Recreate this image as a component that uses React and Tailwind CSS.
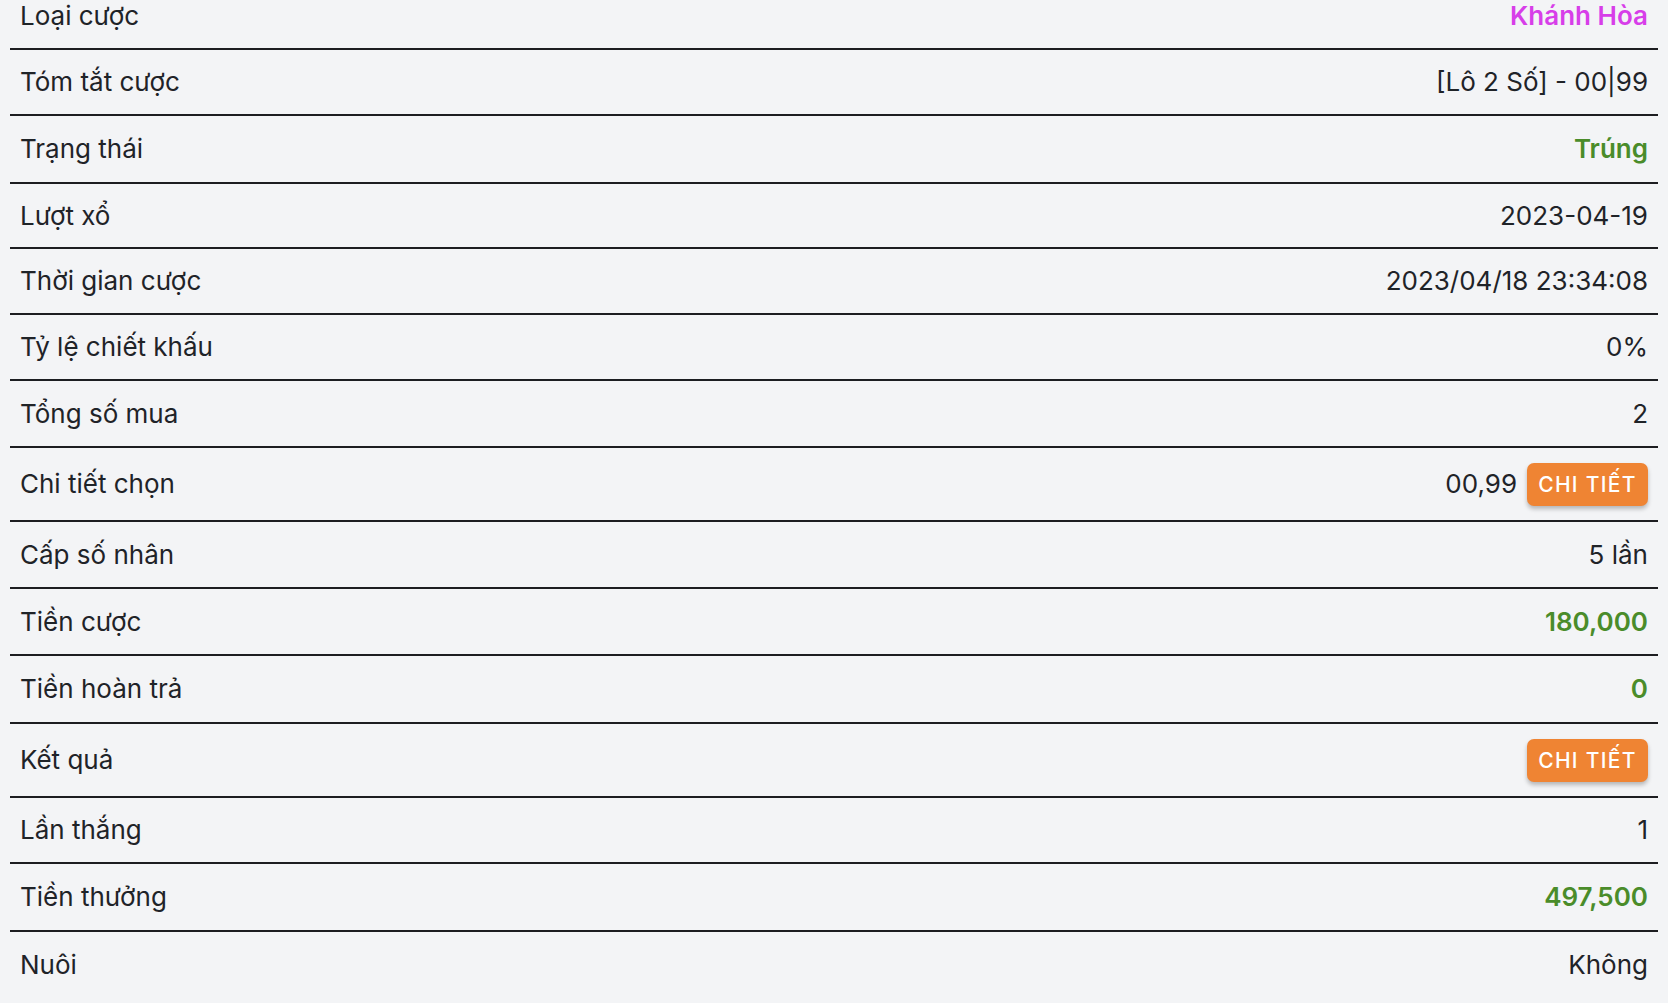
import React from "react";

const rows = [
  { label: "Loại cược", value: "Khánh Hòa", kind: "magenta", h: "h-[66px]" },
  { label: "Tóm tắt cược", value: "[Lô 2 Số] - 00|99", h: "h-[66px]" },
  { label: "Trạng thái", value: "Trúng", kind: "green", h: "h-[68px]" },
  { label: "Lượt xổ", value: "2023-04-19", h: "h-[65px]" },
  { label: "Thời gian cược", value: "2023/04/18 23:34:08", h: "h-[66px]" },
  { label: "Tỷ lệ chiết khấu", value: "0%", h: "h-[66px]" },
  { label: "Tổng số mua", value: "2", h: "h-[67px]" },
  { label: "Chi tiết chọn", value: "00,99", button: true, h: "h-[74px]" },
  { label: "Cấp số nhân", value: "5 lần", h: "h-[67px]" },
  { label: "Tiền cược", value: "180,000", kind: "green", h: "h-[67px]" },
  { label: "Tiền hoàn trả", value: "0", kind: "green", h: "h-[68px]" },
  { label: "Kết quả", value: null, button: true, h: "h-[74px]" },
  { label: "Lần thắng", value: "1", h: "h-[66px]" },
  { label: "Tiền thưởng", value: "497,500", kind: "green", h: "h-[68px]" },
  { label: "Nuôi", value: "Không", h: "h-[66px]", last: true },
];

function Btn() {
  return (
    <button className="ml-[10px] w-[121px] h-[43px] rounded-[7px] bg-[#ef8433] text-white text-[21px] font-medium tracking-[1.3px] shadow-[0_3px_4px_rgba(0,0,0,0.25)] font-['Inter',sans-serif] flex items-center justify-center">
      CHI TIẾT
    </button>
  );
}

export default function App() {
  return (
    <div className="min-h-[1003px] h-[1003px] overflow-hidden bg-[#f3f4f6] font-['Inter',sans-serif] text-[#1f2328]">
      <div className="mx-[10px] -mt-[16px]">
        {rows.map((r, i) => {
          let valueCls = "text-[#1f2328]";
          if (r.kind === "magenta") valueCls = "text-[#d73ee9] font-semibold";
          if (r.kind === "green") valueCls = "text-[#4a8c2a] font-semibold";
          return (
            <div
              key={i}
              className={`${r.h} flex items-center justify-between px-[10px] text-[26px] leading-none ${
                r.last ? "" : "border-b-2 border-[#1c1d21]"
              }`}
            >
              <span>{r.label}</span>
              <div className="flex items-center">
                {r.value !== null && <span className={valueCls}>{r.value}</span>}
                {r.button && <Btn />}
              </div>
            </div>
          );
        })}
      </div>
    </div>
  );
}
